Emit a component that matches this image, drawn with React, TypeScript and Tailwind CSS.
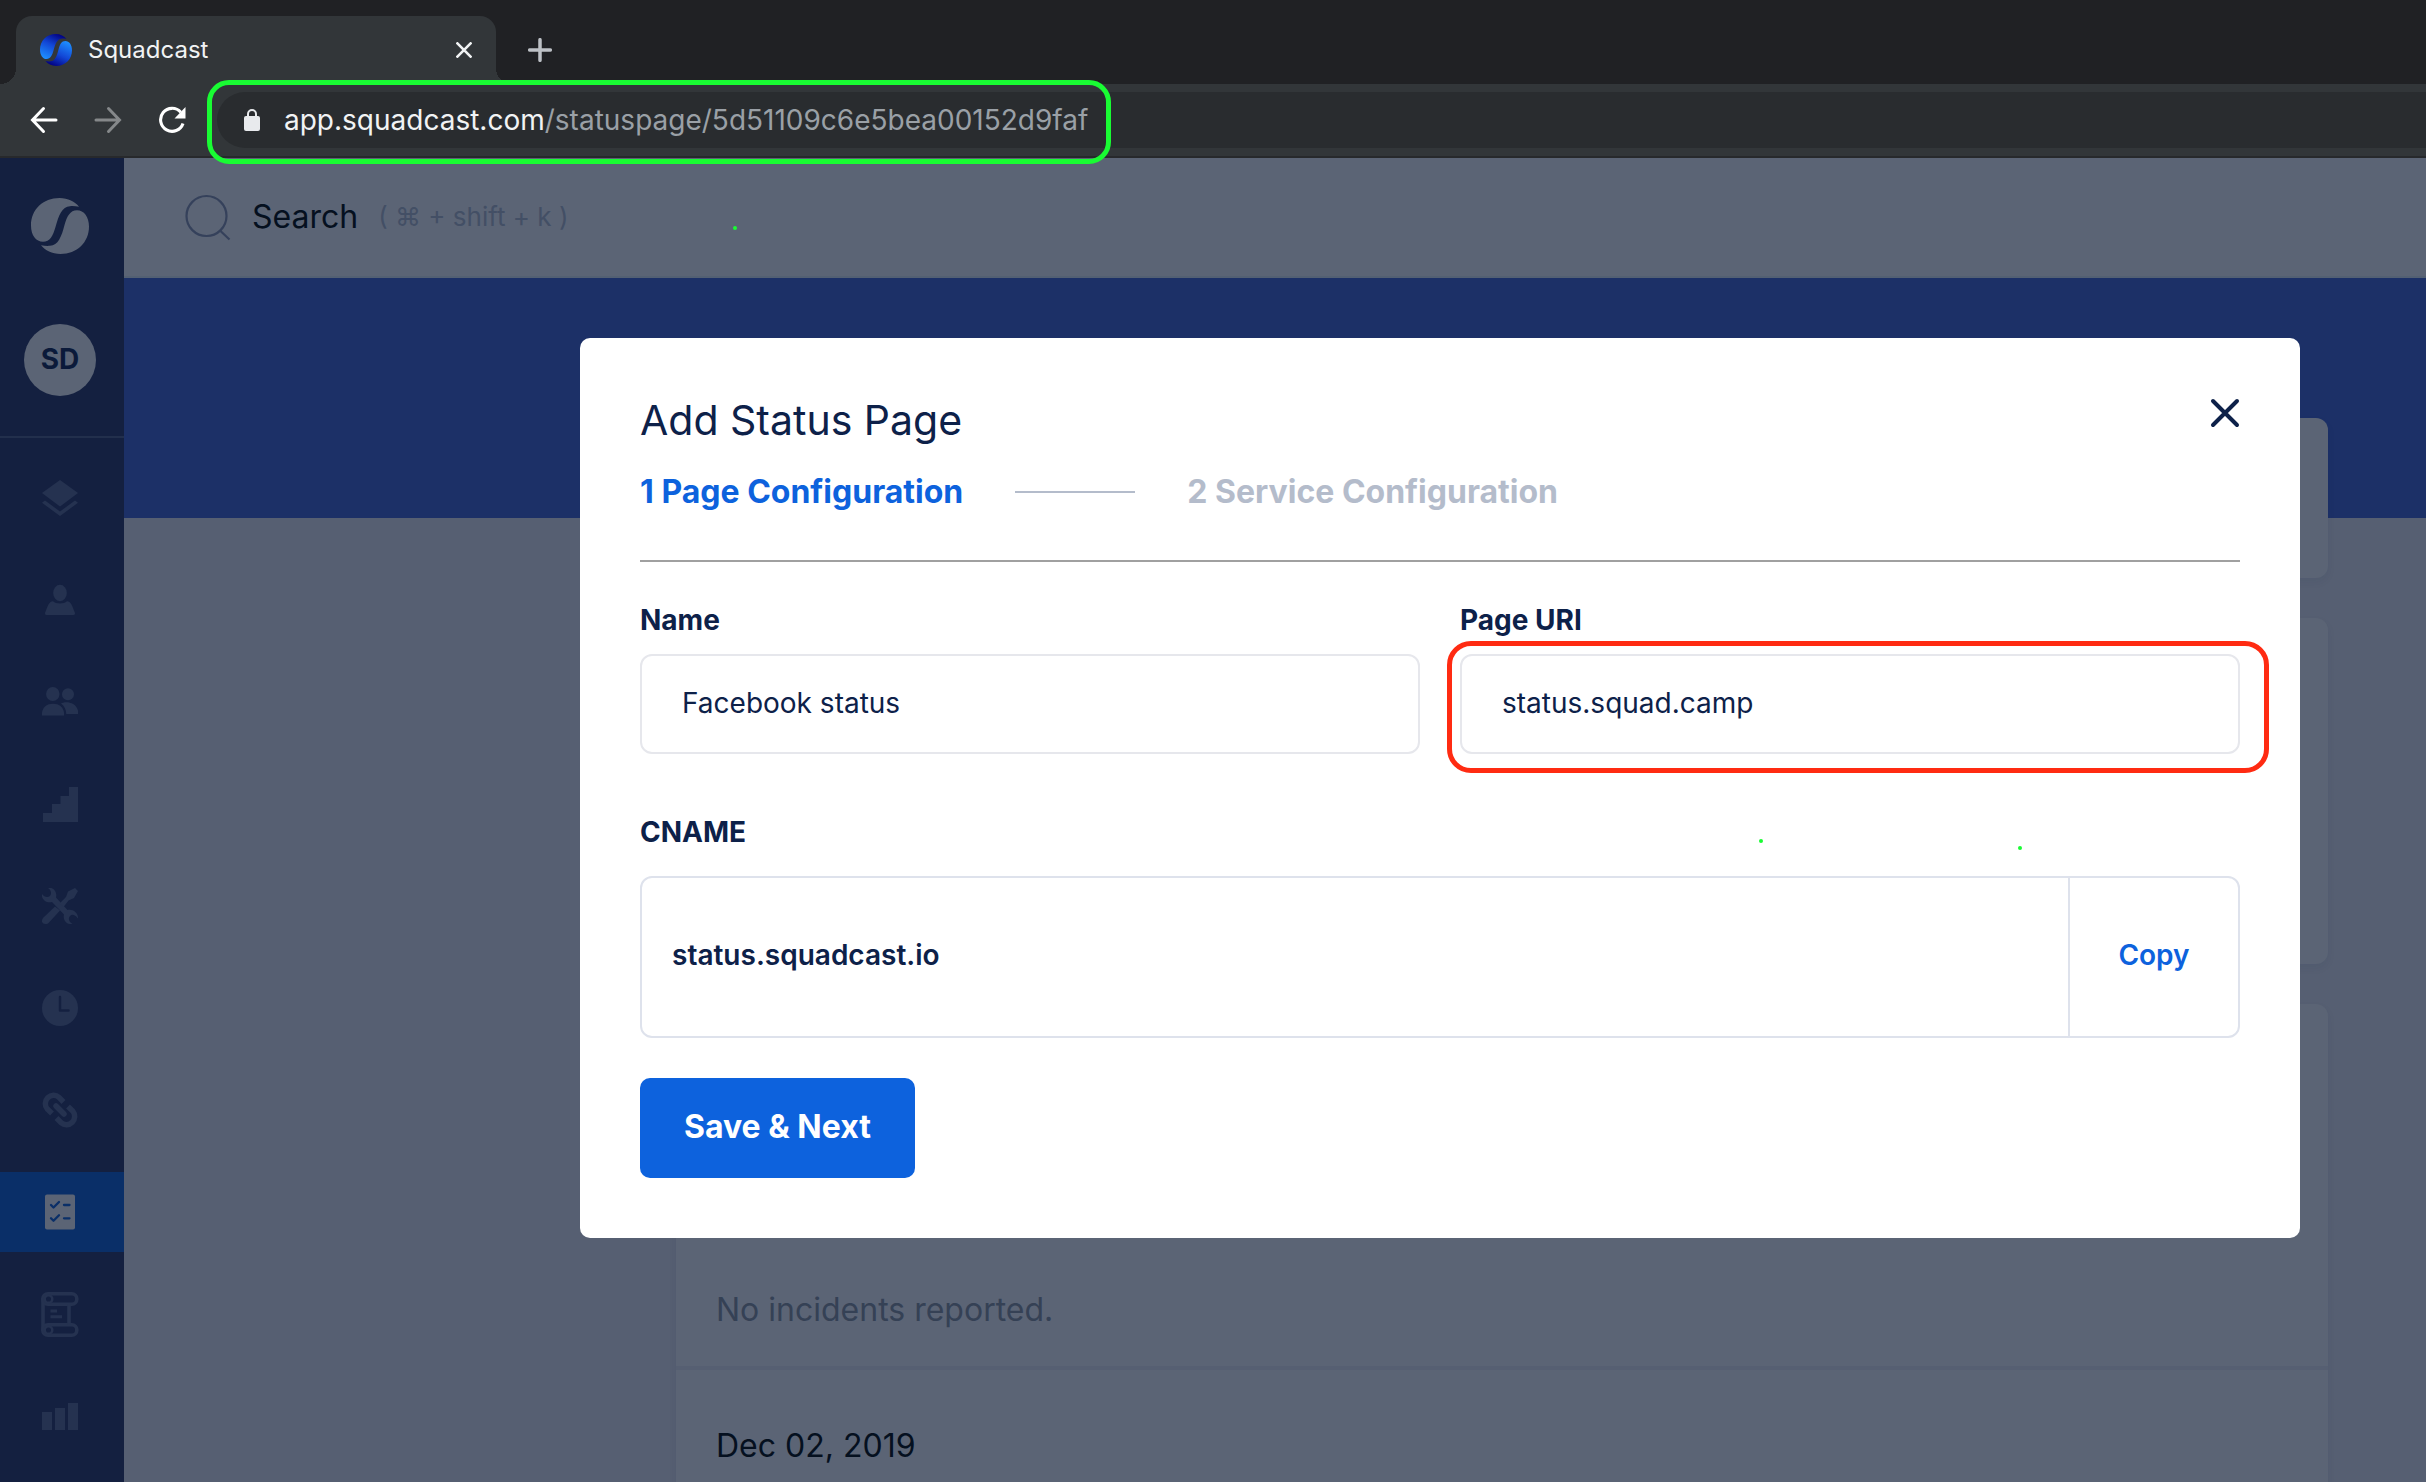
import type { ReactNode } from 'react';

const LOGO_HALF =
  'M48 8.5 C44 3.5 37 0 28.5 0 C12 0 0 11.5 0 27 C0 36.5 5 43 12 43 C19 43 22 37 24.5 28.5 C27.5 17 31 8.5 39 8 C42 7.8 45 8 48 8.5 Z';

function BrandMark({ className, gradient }: { className: string; gradient?: boolean }) {
  const fill = gradient ? 'url(#brand)' : 'currentColor';
  return (
    <svg viewBox="0 0 58 55" preserveAspectRatio="none" className={className} aria-hidden="true">
      {gradient && (
        <defs>
          <linearGradient id="brand" x1="0.7" y1="0" x2="0.2" y2="1">
            <stop offset="0" stopColor="#020283" />
            <stop offset="0.45" stopColor="#1247d6" />
            <stop offset="1" stopColor="#1e90ff" />
          </linearGradient>
        </defs>
      )}
      <path d={LOGO_HALF} fill={fill} />
      <path d={LOGO_HALF} fill={fill} transform="rotate(180 29 27.5)" />
    </svg>
  );
}

function Glyph({ children }: { children: ReactNode }) {
  return (
    <svg viewBox="0 0 36 36" className="size-9" fill="currentColor" aria-hidden="true">
      {children}
    </svg>
  );
}

const LINK_HALF = 'M21.5 10 L17 5.3 A8.3 8.3 0 0 0 5.3 17 L10 21.5';

const NAV: { label: string; active?: boolean; icon: ReactNode }[] = [
  {
    label: 'Dashboard',
    icon: (
      <Glyph>
        <path d="M18 0 36 13 18 26.5 0 13Z" />
        <path d="M3 20.5 0 22.8 18 36 36 22.8 33 20.5 18 31.5Z" />
      </Glyph>
    ),
  },
  {
    label: 'Users',
    icon: (
      <Glyph>
        <ellipse cx="18" cy="11" rx="6.8" ry="8.2" />
        <path d="M11 19.3 C14 22.3 22 22.3 25 19.3 C29 20 29.5 22 33 31 Q33.3 33 31.5 33 H4.5 Q2.7 33 3 31 C6.5 22 7 20 11 19.3Z" />
      </Glyph>
    ),
  },
  {
    label: 'Squads',
    icon: (
      <Glyph>
        <ellipse cx="10.8" cy="10" rx="6.7" ry="7.1" />
        <path d="M0 31.5 V28.5 C1 22.5 5 19.7 11 19.7 S21 22.5 22 28.5 V31.5Z" />
        <circle cx="26" cy="10.3" r="6" />
        <path d="M19 19.5 C22 17.5 33 16.5 36 26.5 V30 H24.3 C24 25.5 22.5 22 19 19.5Z" />
      </Glyph>
    ),
  },
  {
    label: 'Escalation policies',
    icon: (
      <Glyph>
        <path d="M1 27 H10 V18 H18.5 V10 H27 V1 H36 V36 H1Z" />
      </Glyph>
    ),
  },
  {
    label: 'Services',
    icon: (
      <Glyph>
        <path d="M0 6 C2 9 5.500 10 8 8 C10 5.500 9 2 6 0 C11 -1.500 15.500 4 14 9.500 L25.500 22 C31 20.500 36.500 25 36 30.500 C33 26.500 30 26 28 28 C26 30 26.500 33.500 30.500 36 C25 37 20.500 32 22 26.500 L10 14 C4.500 15.500 -1 11 0 6Z" />
        <path d="M36 3 33 0 26 3.500 24 9 17.500 15.500 21.500 19 26.500 12.500 32 10Z" />
        <path d="M13 18.500 1.500 29.500 C-1 32 -0.500 36 3.500 36 C5 36 6 35.500 7 34.500 L18 22.500Z" />
      </Glyph>
    ),
  },
  {
    label: 'Schedules',
    icon: (
      <Glyph>
        <circle cx="18" cy="18" r="18" />
        <path d="M18 7 V20.5 H26.5" fill="none" stroke="#142040" strokeWidth="2.5" strokeLinecap="round" strokeLinejoin="round" />
      </Glyph>
    ),
  },
  {
    label: 'Integrations',
    icon: (
      <Glyph>
        <g fill="none" stroke="currentColor" strokeWidth="5.5">
          <path d={LINK_HALF} strokeLinejoin="round" />
          <path d={LINK_HALF} strokeLinejoin="round" transform="rotate(180 18 18)" />
          <path d="M14 14 L22 22" strokeLinecap="round" />
        </g>
      </Glyph>
    ),
  },
  {
    label: 'Status page',
    active: true,
    icon: (
      <Glyph>
        <rect x="3" y="0.5" width="30" height="35" rx="2" />
        <g fill="none" stroke="#0a2f68" strokeWidth="2.3" strokeLinecap="round" strokeLinejoin="round">
          <path d="M9 11 L11.5 13.5 L17 8 M22 11 H27.5" />
          <path d="M9 24.3 L11.5 26.8 L17 21.3 M22 24.3 H27.5" />
        </g>
      </Glyph>
    ),
  },
  {
    label: 'Postmortems',
    icon: (
      <svg viewBox="0 0 38 45" className="h-[45px] w-[38px]" fill="none" stroke="currentColor" strokeWidth="3.6" aria-hidden="true">
        <rect x="1.8" y="1.8" width="34" height="10.5" rx="5" />
        <rect x="1.8" y="32.7" width="34" height="10.5" rx="5" />
        <path d="M2 6 V39 M28 12 V33" />
        <circle cx="7.5" cy="7" r="3.8" strokeWidth="2.5" />
        <circle cx="7.5" cy="38" r="3.8" strokeWidth="2.5" />
        <path d="M9.500 19 H16 M9.500 24.800 H21" strokeWidth="3" />
      </svg>
    ),
  },
  {
    label: 'Analytics',
    icon: (
      <Glyph>
        <path d="M0 14 H10 V32 H0Z M13 10 H23 V32 H13Z M26 5 H36 V32 H26Z" />
      </Glyph>
    ),
  },
];

function BrowserChrome() {
  return (
    <header className="shrink-0 border-b-2 border-[#27292c] bg-[#323639]">
      <div className="flex h-[84px] items-end bg-[#202124]">
        <span className="size-4 bg-[radial-gradient(circle_at_0_0,transparent_16px,#323639_16px)]" />
        <div className="flex h-[68px] w-[480px] items-center rounded-t-2xl bg-[#323639] px-6">
          <BrandMark gradient className="size-8" />
          <span className="ml-4 flex-1 text-2xl text-[#f1f3f4]">Squadcast</span>
          <button type="button" aria-label="Close tab" className="text-[#f1f3f4]">
            <svg viewBox="0 0 16 16" className="size-4" fill="none" stroke="currentColor" strokeWidth="2.6" aria-hidden="true">
              <path d="M0.5 0.5 15.5 15.5 M15.5 0.5 0.5 15.5" />
            </svg>
          </button>
        </div>
        <span className="size-4 bg-[radial-gradient(circle_at_100%_0,transparent_16px,#323639_16px)]" />
        <button type="button" aria-label="New tab" className="mb-[22px] ml-4 text-[#bdc1c6]">
          <svg viewBox="0 0 24 24" className="size-6" fill="none" stroke="currentColor" strokeWidth="3.5" strokeLinecap="round" aria-hidden="true">
            <path d="M12 1.7 V22.3 M1.7 12 H22.3" />
          </svg>
        </button>
      </div>
      <div className="flex h-[72px] items-center pl-[30px]">
        <button type="button" aria-label="Back" className="text-white">
          <svg viewBox="0 0 28 28" className="size-7" fill="none" stroke="currentColor" strokeWidth="3" strokeLinecap="round" aria-hidden="true">
            <path d="M26 14 H3 M13.5 2.5 2.5 14 13.5 25.5" />
          </svg>
        </button>
        <button type="button" aria-label="Forward" className="ml-9 text-[#85888a]">
          <svg viewBox="0 0 28 28" className="size-7" fill="none" stroke="currentColor" strokeWidth="3" strokeLinecap="round" aria-hidden="true">
            <path d="M2 14 H25 M14.5 2.5 25.5 14 14.5 25.5" />
          </svg>
        </button>
        <button type="button" aria-label="Reload" className="ml-9 text-white">
          <svg viewBox="0 0 28 28" className="size-7" aria-hidden="true">
            <path d="M22.8 6.3 A11.5 11.5 0 1 0 25 17.5" fill="none" stroke="currentColor" strokeWidth="3.1" />
            <path d="M27.5 1 V12.5 H16.5Z" fill="currentColor" />
          </svg>
        </button>
        <div className="relative ml-[31px] flex h-14 flex-1 items-center rounded-l-full bg-[#292c2f] pl-[27px] text-[28px] leading-10 whitespace-nowrap">
          <svg viewBox="0 0 16 22" className="h-[22px] w-4" aria-hidden="true">
            <path d="M4 8 V5 A4 4 0 0 1 12 5 V8" fill="none" stroke="#e8eaed" strokeWidth="2" />
            <rect y="7" width="16" height="15" rx="2" fill="#e8eaed" />
          </svg>
          <div role="textbox" aria-label="Address" className="ml-6 text-[#9aa0a6]">
            <span className="text-[#f1f3f4]">app.squadcast.com</span>/statuspage/5d51109c6e5bea00152d9faf
          </div>
          <span className="pointer-events-none absolute -top-3 -left-2.5 z-10 h-[84px] w-[904px] rounded-[22px] border-5 border-[#19fc33]" />
        </div>
      </div>
    </header>
  );
}

function Sidebar() {
  return (
    <nav className="w-[124px] shrink-0 bg-[#142040] pt-10">
      <div className="flex flex-col items-center gap-[70px] pr-1">
        <BrandMark className="h-14 w-[58px] text-[#5b6475]" />
        <div className="flex size-[72px] items-center justify-center rounded-full bg-[#5b6475] pb-0.5 text-[28px] font-bold text-[#0b1a3a]">
          SD
        </div>
      </div>
      <hr className="mt-10 border-t-2 border-[#222f4c]" />
      <ul className="mt-5 flex flex-col gap-[22px]">
        {NAV.map((item) => (
          <li key={item.label}>
            <a
              href="#"
              aria-label={item.label}
              className={
                item.active
                  ? 'flex h-20 items-center justify-center bg-[#0a2f68] pr-1 text-[#5b6475]'
                  : 'flex h-20 items-center justify-center pr-1 text-[#253250]'
              }
            >
              {item.icon}
            </a>
          </li>
        ))}
      </ul>
    </nav>
  );
}

function StatusPage() {
  return (
    <main className="min-w-0 flex-1 bg-[#565f72]">
      <div className="relative flex h-[120px] items-center border-b-2 border-[#536073] bg-[#5b6475] pl-[60px]">
        <button type="button" className="flex items-center text-left">
          <svg viewBox="0 0 48 48" className="size-12" fill="none" stroke="#35415b" strokeWidth="2.2" aria-hidden="true">
            <circle cx="22.5" cy="23" r="20" />
            <path d="M36.5 38 L45.5 46.5" />
          </svg>
          <span className="ml-5 text-[32px] leading-10 text-[#05101f]">Search</span>
          <span className="ml-5 text-[26px] leading-10 text-[#434f65]">( ⌘ + shift + k )</span>
        </button>
        <span className="absolute top-[68px] left-[609px] size-1 rounded-full bg-[#19fc33]" />
      </div>
      <div className="h-60 bg-[#1c3067]" />
      <div className="relative -mt-[100px] flex flex-col gap-10 pr-[98px] pl-[552px]">
        <div className="h-40 rounded-xl bg-[#5b6475] shadow-[0_4px_8px_rgba(20,32,64,0.06)]" />
        <div className="h-[346px] rounded-xl bg-[#5b6475] shadow-[0_4px_8px_rgba(20,32,64,0.06)]" />
        <div className="rounded-xl bg-[#5b6475] text-[32px] leading-10 shadow-[0_4px_8px_rgba(20,32,64,0.06)]">
          <p className="border-b-4 border-[#565f72] px-10 pt-[286px] pb-9 text-[#354155]">No incidents reported.</p>
          <p className="px-10 pt-14 pb-10 text-[#05101f]">Dec 02, 2019</p>
        </div>
      </div>
    </main>
  );
}

const INPUT =
  'h-[100px] w-full rounded-xl border-2 border-[#e6e7ec] bg-white px-10 pb-0.5 text-[28px] text-[#0d2149] outline-none';
const LABEL = 'block text-[28px] leading-10 font-bold text-[#0d2149]';

function AddStatusPageDialog() {
  return (
    <div className="absolute inset-0 pt-[180px] pr-[126px] pl-[580px]">
      <form
        role="dialog"
        aria-labelledby="dialog-title"
        onSubmit={(e) => e.preventDefault()}
        className="relative rounded-[10px] bg-white p-[60px] text-[#0d2149]"
      >
        <div className="flex items-start justify-between">
          <h1 id="dialog-title" className="text-[41px] leading-11">
            Add Status Page
          </h1>
          <button type="button" aria-label="Close">
            <svg viewBox="0 0 30 30" className="size-[30px]" fill="none" stroke="currentColor" strokeWidth="4" strokeLinecap="round" aria-hidden="true">
              <path d="M3 3 27 27 M27 3 3 27" />
            </svg>
          </button>
        </div>
        <ol className="mt-[30px] flex items-center gap-[52px] border-b-2 border-[#a0a0a0] pb-12 text-[32px] leading-10 font-bold">
          <li className="text-[#0d62dd]">1 Page Configuration</li>
          <li aria-hidden="true" className="h-0.5 w-[120px] bg-[#b4bccb]" />
          <li className="text-[#b4bccb]">2 Service Configuration</li>
        </ol>
        <div className="mt-[38px] grid grid-cols-2 gap-10">
          <div>
            <label htmlFor="page-name" className={LABEL}>
              Name
            </label>
            <input id="page-name" defaultValue="Facebook status" className={`mt-3.5 ${INPUT}`} />
          </div>
          <div>
            <label htmlFor="page-uri" className={LABEL}>
              Page URI
            </label>
            <div className="relative mt-3.5">
              <input id="page-uri" defaultValue="status.squad.camp" className={INPUT} />
              <span className="pointer-events-none absolute -top-[13px] -right-[29px] -bottom-[19px] -left-[13px] rounded-3xl border-5 border-[#ff2b12]" />
            </div>
          </div>
        </div>
        <h2 className="mt-[58px] text-[28px] leading-10 font-bold">CNAME</h2>
        <div className="mt-6 flex h-[162px] rounded-xl border-2 border-[#dee2ec] text-[28px] leading-10 font-semibold">
          <div className="flex flex-1 items-center pb-1 pl-[30px]">status.squadcast.io</div>
          <button type="button" className="w-[170px] border-l-2 border-[#dee2ec] pb-1 text-[#0d62dd]">
            Copy
          </button>
        </div>
        <button type="submit" className="mt-10 block h-[100px] rounded-[10px] bg-[#0d62dd] px-11 pb-0.5 text-[32px] font-bold text-white">
          Save &amp; Next
        </button>
        <span className="absolute top-[501px] left-[1179px] size-1 rounded-full bg-[#19fc33]" />
        <span className="absolute top-[508px] left-[1438px] size-1 rounded-full bg-[#19fc33]" />
      </form>
    </div>
  );
}

export default function App() {
  return (
    <div className="flex h-screen flex-col overflow-hidden font-['Inter',sans-serif]">
      <BrowserChrome />
      <div className="relative flex min-h-0 flex-1">
        <Sidebar />
        <StatusPage />
        <AddStatusPageDialog />
      </div>
    </div>
  );
}
